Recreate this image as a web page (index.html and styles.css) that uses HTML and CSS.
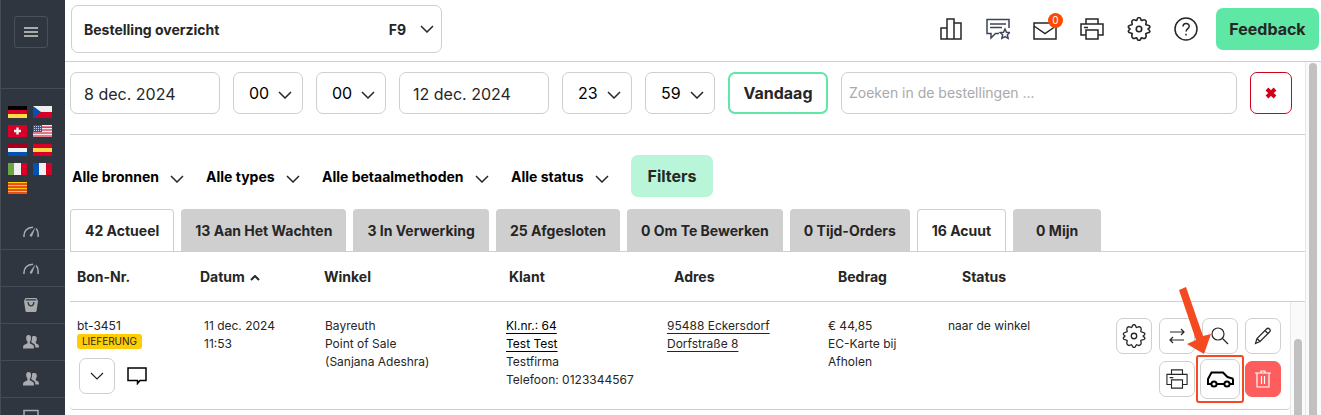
FILE: index.html
```html
<!DOCTYPE html>
<html lang="nl">
<head>
    <meta charset="UTF-8">
    <meta name="viewport" content="width=device-width, initial-scale=1.0">
    <title>Bestelling overzicht</title>
    <link rel="stylesheet" href="styles.css">
</head>
<body>
<svg class="sprite" aria-hidden="true">
    <symbol id="chevron" viewBox="0 0 14 8"><path d="M1 1l6 6 6-6"/></symbol>
    <symbol id="gear" viewBox="1 1 22 22">
        <path d="M9.800 4.200c.6-.3.4-2.700 2.200-2.700s1.600 2.400 2.200 2.700 2.100-1.700 3.700-.2.200 3.100.3 3.900c.3.600 3.800.4 3.800 2.100 0 1.600-1.700 1.500-1.700 2s1.700.8 1.700 2.200c0 1.500-3.500 1.300-3.800 2s1.300 2.300-.3 3.900-3.100-.4-3.700-.1-.4 2.500-2.200 2.500-1.600-2.200-2.200-2.500-2.100 1.700-3.700.1-.1-3.200-.3-3.900-3.600-.5-3.600-2c0-1.400 1.600-1.700 1.600-2.200S2.200 11.600 2.200 10c0-1.700 3.400-1.500 3.600-2.100s-1.300-2.400.3-3.900 3.100.5 3.700.2z"/>
        <circle cx="12" cy="12" r="2.500"/>
    </symbol>
    <symbol id="printer" viewBox="0 0 24 24">
        <path d="M6 7V2h12v5M6 18H1V7h22v11h-5M4 10.500h4"/>
        <path d="M6 13h12v9H6z"/>
    </symbol>
    <symbol id="gauge" viewBox="0 0 16 11">
        <path d="M1 11C.5 5 4 1.500 10 1.200M13.200 2.500C15 5 15.500 8 15 11"/>
        <path d="M12.500 1L7 8.800c-.8 1.700 1.300 2.700 2.200 1.200z" fill="currentColor" stroke="none"/>
    </symbol>
    <symbol id="users" viewBox="0 0 16 14">
        <path d="M5.500 0C3.600 0 3 1.500 3.200 3.500c.1 1.600.8 2.600 1.300 3.200v1.600L1 10c-.8.500-1 1.500-1 3.500h11c0-2-.2-3-1-3.500L6.800 8.300V6.700c.6-.6 1.200-1.600 1.300-3.200C8.200 1.500 7.500 0 5.500 0z"/>
        <path d="M10.500 1c-1 0-1.500.6-1.500 2 .1 2-.6 3-.9 4l2.900 2c1 .7 1.300 1.500 1.300 3.500H16c0-1.800-.2-2.600-1-3l-2.200-1.300V6.800c.5-.6.900-1.400 1-2.800.1-1.800-.8-3-2.300-3z"/>
    </symbol>
</svg>

<nav class="sidebar">
    <button type="button" class="menu-toggle" aria-label="Menu"><span></span><span></span><span></span></button>
    <div class="flags">
        <a href="#de" class="flag de" aria-label="Deutsch"></a>
        <a href="#cz" class="flag" aria-label="Čeština">
            <svg viewBox="0 0 19 12"><path fill="#eee" d="M0 0h19v6H0z"/><path fill="#d80027" d="M0 6h19v6H0z"/><path fill="#0052b4" d="M0 0l8 6-8 6z"/></svg>
        </a>
        <a href="#ch" class="flag" aria-label="Schwiiz">
            <svg viewBox="0 0 19 12"><path fill="#d80027" d="M0 0h19v12H0z"/><path fill="#f0f0f0" d="M8.300 2.500h2.400v2.300H13v2.400h-2.300v2.300H8.300V7.200H6V4.800h2.300z"/></svg>
        </a>
        <a href="#us" class="flag" aria-label="English">
            <svg viewBox="0 0 19 12"><path fill="#eee" d="M0 0h19v12H0z"/><path stroke="#d80027" stroke-width="1.200" d="M0 2.100h19M0 5h19M0 8h19M0 11h19"/><path fill="#2e52b2" d="M0 0h9v7H0z"/><path stroke="#c5d0ee" stroke-dasharray="1 1" d="M1 1.500h7M1 3.500h7M1 5.500h7"/></svg>
        </a>
        <a href="#nl" class="flag nl" aria-label="Nederlands"></a>
        <a href="#es" class="flag es" aria-label="Español"></a>
        <a href="#it" class="flag it" aria-label="Italiano"></a>
        <a href="#fr" class="flag fr" aria-label="Français"></a>
        <a href="#ca" class="flag ca" aria-label="Català"></a>
    </div>
    <ul class="side-menu">
        <li><a href="#dashboard" aria-label="Dashboard"><svg class="line" width="16" height="11"><use href="#gauge"/></svg></a></li>
        <li><a href="#stats" aria-label="Statistiek"><svg class="line" width="16" height="11"><use href="#gauge"/></svg></a></li>
        <li><a href="#orders" aria-label="Bestellingen">
            <svg width="14" height="14" viewBox="0 0 14 14"><path fill="currentColor" fill-rule="evenodd" d="M1.500 0h11L14 3l-1.500 10c-.1.700-.5 1-1 1h-9c-.5 0-.9-.3-1-1L0 3zM2 1.300L1.500 2.500h11L12 1.300zM3.500 4c0 3 1.500 4.500 3.500 4.500S10.500 7 10.500 4H9.200c0 2-.8 3.200-2.200 3.200S4.800 6 4.800 4z"/></svg>
        </a></li>
        <li><a href="#customers" aria-label="Klanten"><svg width="16" height="14" fill="currentColor"><use href="#users"/></svg></a></li>
        <li><a href="#staff" aria-label="Personeel"><svg width="16" height="14" fill="currentColor"><use href="#users"/></svg></a></li>
        <li><a href="#pos" aria-label="Kassa"><svg class="line" width="18" height="14" viewBox="0 0 18 14"><path d="M2 11V1.500h14V11M0 13h18"/></svg></a></li>
    </ul>
</nav>

<div class="page">
    <header class="topbar">
        <button type="button" class="page-select">
            <span>Bestelling overzicht</span>
            <kbd>F9</kbd>
            <svg class="chevron" width="14" height="8"><use href="#chevron"/></svg>
        </button>
        <div class="tools">
            <a href="#stats" aria-label="Statistiek"><svg width="24" height="24" viewBox="0 0 24 24"><path d="M2 11h6v11H2zM8 2h7v20H8zM15 6h7v16h-7z"/></svg></a>
            <a href="#reviews" class="reviews" aria-label="Beoordelingen"><svg width="24" height="24" viewBox="0 0 24 24"><path d="M23 11V2.500H1v14h4V21l4.500-4.500H13M4 7h16M4 10.500h12"/><path d="M19 12l1.500 3.200 3.300.3-2.400 2.300.7 3.500-3.100-1.700-3.100 1.700.7-3.500-2.400-2.300 3.300-.3z"/></svg></a>
            <a href="#mail" class="mail" aria-label="Berichten"><svg width="24" height="24" viewBox="0 0 24 24"><path d="M1 6h22v16H1zM1 9l11 7.500L23 9"/></svg><span class="badge">0</span></a>
            <a href="#print" aria-label="Afdrukken"><svg width="24" height="24"><use href="#printer"/></svg></a>
            <a href="#settings" aria-label="Instellingen"><svg width="24" height="24"><use href="#gear"/></svg></a>
            <a href="#help" aria-label="Help"><svg width="24" height="24" viewBox="0 0 24 24"><circle cx="12" cy="12" r="11"/><path d="M9 9.500c0-4 6.200-4 6.200-.3 0 2.500-3.100 2.400-3.100 5.300M12 16.800v1.700"/></svg></a>
        </div>
        <button type="button" class="btn btn-feedback">Feedback</button>
    </header>

    <div class="content">
        <main>
            <form class="search-bar">
                <input type="text" class="date" value="8 dec. 2024" aria-label="Datum van">
                <label class="select"><select aria-label="Uur van"><option>00</option></select><svg class="chevron" width="14" height="8"><use href="#chevron"/></svg></label>
                <label class="select"><select aria-label="Minuut van"><option>00</option></select><svg class="chevron" width="14" height="8"><use href="#chevron"/></svg></label>
                <input type="text" class="date" value="12 dec. 2024" aria-label="Datum tot">
                <label class="select"><select aria-label="Uur tot"><option>23</option></select><svg class="chevron" width="14" height="8"><use href="#chevron"/></svg></label>
                <label class="select"><select aria-label="Minuut tot"><option>59</option></select><svg class="chevron" width="14" height="8"><use href="#chevron"/></svg></label>
                <button type="button" class="btn btn-today">Vandaag</button>
                <input type="search" class="search" placeholder="Zoeken in de bestellingen ..." aria-label="Zoeken">
                <button type="reset" class="btn btn-clear" aria-label="Wissen">
                    <svg width="12" height="12" viewBox="0 0 12 12"><path d="M2 2l8 8M10 2l-8 8"/></svg>
                </button>
            </form>

            <form class="filters">
                <label class="filter"><select aria-label="Bronnen"><option>Alle bronnen</option></select><svg class="chevron" width="14" height="8"><use href="#chevron"/></svg></label>
                <label class="filter"><select aria-label="Types"><option>Alle types</option></select><svg class="chevron" width="14" height="8"><use href="#chevron"/></svg></label>
                <label class="filter"><select aria-label="Betaalmethoden"><option>Alle betaalmethoden</option></select><svg class="chevron" width="14" height="8"><use href="#chevron"/></svg></label>
                <label class="filter"><select aria-label="Status"><option>Alle status</option></select><svg class="chevron" width="14" height="8"><use href="#chevron"/></svg></label>
                <button type="button" class="btn btn-filters">Filters</button>
            </form>

            <div class="tabs">
                <button type="button" class="tab active">42 Actueel</button>
                <button type="button" class="tab">13 Aan Het Wachten</button>
                <button type="button" class="tab">3 In Verwerking</button>
                <button type="button" class="tab">25 Afgesloten</button>
                <button type="button" class="tab">0 Om Te Bewerken</button>
                <button type="button" class="tab">0 Tijd-Orders</button>
                <button type="button" class="tab active">16 Acuut</button>
                <button type="button" class="tab">0 Mijn</button>
            </div>

            <table class="orders">
                <thead>
                    <tr>
                        <th>Bon-Nr.</th>
                        <th>Datum <svg class="sort" width="10" height="6" viewBox="0 0 10 6"><path d="M1 5l4-4 4 4"/></svg></th>
                        <th>Winkel</th>
                        <th>Klant</th>
                        <th>Adres</th>
                        <th>Bedrag</th>
                        <th>Status</th>
                    </tr>
                </thead>
                <tbody>
                    <tr>
                        <td>
                            bt-3451
                            <span class="tag">LIEFERUNG</span>
                            <div class="order-tools">
                                <button type="button" class="icon-btn" aria-label="Details"><svg width="14" height="8"><use href="#chevron"/></svg></button>
                                <svg class="comment" width="20" height="18" viewBox="0 0 20 18"><path d="M1 1h18v12.500h-6l-2.500 3v-3H1z"/></svg>
                            </div>
                        </td>
                        <td>11 dec. 2024<br>11:53</td>
                        <td>Bayreuth<br>Point of Sale<br>(Sanjana Adeshra)</td>
                        <td><a href="#customer" class="customer">Kl.nr.: 64</a><br><a href="#customer" class="customer">Test Test</a><br>Testfirma<br>Telefoon: 0123344567</td>
                        <td><a href="#map">95488 Eckersdorf</a><br><a href="#map">Dorfstraße 8</a></td>
                        <td>€ 44,85<br>EC-Karte bij<br>Afholen</td>
                        <td class="status">
                            <span>naar de winkel</span>
                            <div class="actions">
                                <button type="button" class="icon-btn" aria-label="Instellingen"><svg width="24" height="24"><use href="#gear"/></svg></button>
                                <button type="button" class="icon-btn" aria-label="Verplaatsen"><svg width="16" height="16" viewBox="0 0 16 16"><path d="M1 4h14M12 1l3 3-3 3M15 12H1M4 9l-3 3 3 3"/></svg></button>
                                <button type="button" class="icon-btn" aria-label="Bekijken"><svg width="18" height="18" viewBox="0 0 18 18"><circle cx="7" cy="7" r="6"/><path d="M11.500 11.500L17 17"/></svg></button>
                                <button type="button" class="icon-btn" aria-label="Bewerken"><svg width="18" height="18" viewBox="0 0 18 18"><path d="M1.500 16.500l1.500-5L12.500 2c2-2 5 1 3 3L6 14.500zM11 3.500L14.500 7M3 11.500L6 14.500"/></svg></button>
                                <button type="button" class="icon-btn print" aria-label="Afdrukken"><svg width="22" height="22"><use href="#printer"/></svg></button>
                                <div class="highlight">
                                    <button type="button" class="icon-btn" aria-label="Bezorger">
                                        <svg class="car" width="28" height="18" viewBox="0 0 28 18"><path d="M5 14H2V9l3.500-6.500h11.500l4.500 4.500 5 1.500.5 1.500v4h-3M11 14h7"/><circle cx="8" cy="14" r="2.600"/><circle cx="21" cy="14" r="2.600"/></svg>
                                    </button>
                                    <svg class="arrow" width="34" height="68" viewBox="0 0 34 68"><path d="M1 3l7-3 17 49 8-2-7 20L9 57l9-4z"/></svg>
                                </div>
                                <button type="button" class="icon-btn delete" aria-label="Verwijderen"><svg width="16" height="20" viewBox="0 0 16 20"><path d="M0 4h16M2 4v14h12V4M6 4V2h4v2M6.500 7v8M9.500 7v8"/></svg></button>
                            </div>
                        </td>
                    </tr>
                </tbody>
            </table>
            <div class="scrollbar list-scroll"><span></span></div>
        </main>
        <div class="scrollbar page-scroll"><span></span></div>
    </div>
</div>
</body>
</html>
```
FILE: styles.css
```css
:root {
    --dark: #2f3640;
    --text: #262626;
    --border: #cfcfcf;
    --green: #5fe7a5;
    --light-green: #b9f5d8;
    --red: #d0021b;
    --orange: #f44a22;
}

* {
    box-sizing: border-box;
}

body {
    display: flex;
    height: 100vh;
    margin: 0;
    overflow: hidden;
    font-family: Inter, "Liberation Sans", sans-serif;
    font-size: 12px;
    color: var(--text);
    background-color: #fff;
}

button, input, select {
    font: inherit;
    color: inherit;
}

button {
    cursor: pointer;
}

svg {
    display: block;
    flex: none;
}

.sprite {
    position: absolute;
    width: 0;
    height: 0;
}

/* Sidebar */
.sidebar {
    flex: none;
    width: 65px;
    overflow: hidden;
    background-color: var(--dark);
    border-left: 1px solid #454c56;
}

.menu-toggle {
    display: flex;
    flex-direction: column;
    align-items: center;
    justify-content: center;
    gap: 2px;
    width: 34px;
    height: 32px;
    margin: 16px 13px 40px;
    padding: 0;
    background: none;
    border: 1px solid #4a505a;
    border-radius: 3px;
}

.menu-toggle span {
    width: 14px;
    height: 2px;
    background-color: #aaa;
}

.flags {
    display: grid;
    grid-template-columns: 19px 19px;
    gap: 7px 6px;
    padding: 17px 7px 19px;
    border-top: 1px solid #454c56;
}

.flag {
    height: 12px;
}

.de { background: linear-gradient(#000 33%, #d80027 33% 66%, #ffda44 66%); }
.nl { background: linear-gradient(#a2001d 33%, #f0f0f0 33% 66%, #0052b4 66%); }
.es { background: linear-gradient(#d80027 33%, #ffda44 33% 66%, #d80027 66%); }
.it { background: linear-gradient(90deg, #6da544 33%, #f0f0f0 33% 66%, #d80027 66%); }
.fr { background: linear-gradient(90deg, #0052b4 33%, #f0f0f0 33% 66%, #d80027 66%); }
.ca { background: repeating-linear-gradient(#ffcd00 0 1px, #e8501a 1px 3px); }

.side-menu {
    margin: 0;
    padding: 0;
    list-style: none;
}

.side-menu a {
    display: flex;
    align-items: center;
    justify-content: center;
    height: 37px;
    padding-right: 4px;
    color: #a9abae;
    border-bottom: 1px solid #454c56;
}

.side-menu .line {
    fill: none;
    stroke: currentColor;
    stroke-width: 1.5px;
}

/* Top bar */
.page {
    display: flex;
    flex: 1;
    flex-direction: column;
    min-width: 0;
}

.topbar {
    display: flex;
    align-items: center;
    height: 62px;
    padding: 0 2px 4px 6px;
    border-bottom: 1px solid var(--border);
}

.page-select {
    display: flex;
    align-items: center;
    width: 371px;
    height: 48px;
    padding: 1px 7px 0 12px;
    font-size: 14px;
    font-weight: 700;
    background: none;
    border: 1px solid var(--border);
    border-radius: 7px;
}

.page-select kbd {
    margin: 0 14px 0 auto;
    font: inherit;
}

.chevron {
    fill: none;
    stroke: var(--text);
    stroke-width: 1.5px;
    pointer-events: none;
}

.tools {
    display: flex;
    gap: 23px;
    margin: 0 18px 0 auto;
}

.tools a {
    position: relative;
    color: var(--text);
}

.tools svg {
    fill: none;
    stroke: currentColor;
    stroke-width: 1.5px;
}

.tools .reviews {
    color: #3d4457;
}

.badge {
    position: absolute;
    top: -4px;
    right: -6px;
    width: 15px;
    height: 15px;
    font-size: 10px;
    line-height: 15px;
    text-align: center;
    color: #fff;
    background-color: #ff4800;
    border-radius: 50%;
}

.btn {
    height: 42px;
    padding: 0;
    font-size: 16px;
    font-weight: 700;
    border: none;
    border-radius: 7px;
}

.btn-feedback {
    width: 103px;
    background-color: var(--green);
}

/* Content */
.content {
    display: flex;
    flex: 1;
    min-height: 0;
}

main {
    position: relative;
    flex: 1;
    min-width: 0;
    padding-left: 5px;
    overflow: hidden;
}

.search-bar {
    display: flex;
    gap: 13px;
    padding: 10px 13px 20px 0;
    border-bottom: 1px solid var(--border);
}

.search-bar input, .select select {
    height: 42px;
    padding: 0 13px;
    font-size: 16px;
    background: #fff;
    border: 1px solid var(--border);
    border-radius: 7px;
    outline: none;
}

.search-bar .date {
    width: 150px;
    padding-top: 2px;
}

.search-bar .search {
    flex: 1;
    min-width: 0;
    padding: 0 7px 2px;
    font-size: 14px;
    appearance: none;
}

.search::placeholder {
    color: #a9a9a9;
}

.select, .filter {
    position: relative;
}

.select select, .filter select {
    appearance: none;
    color: #000;
}

.select select {
    width: 70px;
    padding: 0 0 0 15px;
}

.select .chevron {
    position: absolute;
    top: 19px;
    right: 11px;
}

.btn-today {
    width: 100px;
    background-color: #fff;
    border: 2px solid var(--green);
}

.btn-clear {
    display: flex;
    align-items: center;
    justify-content: center;
    width: 42px;
    background-color: #fff;
    border: 1px solid var(--red);
}

.btn-clear svg {
    stroke: var(--red);
    stroke-width: 4px;
}

.filters {
    display: flex;
    align-items: center;
    gap: 22px;
    padding: 20px 0 12px 2px;
}

.filter select {
    height: 42px;
    padding: 0 25px 0 0;
    font-size: 14px;
    font-weight: 700;
    background: none;
    border: none;
}

.filter .chevron {
    position: absolute;
    top: 20px;
    right: 0;
}

.btn-filters {
    width: 82px;
    background-color: var(--light-green);
}

.tabs {
    display: flex;
    gap: 7px;
    border-bottom: 1px solid var(--border);
}

.tab {
    min-width: 88px;
    height: 42px;
    padding: 0 13px;
    font-size: 14px;
    font-weight: 700;
    white-space: nowrap;
    background-color: var(--border);
    border: 1px solid var(--border);
    border-bottom: none;
    border-radius: 4px 4px 0 0;
}

.tab.active {
    padding: 0 14px;
    background-color: #fff;
}

.orders, .orders thead, .orders tbody {
    display: block;
}

.orders tr {
    display: grid;
    grid-template-columns: 123fr 124fr 185fr 165fr 164fr 124fr 350fr;
    border-bottom: 1px solid var(--border);
}

.orders th {
    padding: 0 0 0 7px;
    font-size: 14px;
    font-weight: 700;
    line-height: 49px;
    text-align: left;
}

.sort {
    display: inline-block;
    margin-left: 2px;
    vertical-align: 1px;
    fill: none;
    stroke: var(--text);
    stroke-width: 2px;
}

.orders tbody {
    margin-right: 15px;
}

.orders tbody tr {
    grid-template-columns: 127fr 121fr 181fr 161fr 161fr 120fr 349fr;
    min-height: 108px;
    border-bottom-left-radius: 4px;
    border-bottom-right-radius: 4px;
}

.orders td {
    padding: 15px 0 0 7px;
    line-height: 18px;
}

.orders td a {
    color: inherit;
    text-decoration: underline;
    text-underline-offset: 3px;
}

.orders td .customer {
    color: #000;
}

.tag {
    display: block;
    width: 65px;
    height: 15px;
    margin-top: -1px;
    font-size: 10px;
    line-height: 15px;
    text-align: center;
    background-color: #ffcd05;
    border-radius: 3px;
}

.order-tools {
    display: flex;
    align-items: center;
    gap: 12px;
    margin: 9px 0 0 2px;
}

.icon-btn {
    display: flex;
    align-items: center;
    justify-content: center;
    width: 36px;
    height: 36px;
    padding: 0;
    background-color: #fff;
    border: 1px solid var(--border);
    border-radius: 7px;
}

.icon-btn svg {
    fill: none;
    stroke: var(--text);
    stroke-width: 1.2px;
}

.comment {
    fill: none;
    stroke: #000;
    stroke-width: 1.5px;
}

.orders .status {
    display: flex;
    justify-content: space-between;
    padding-right: 9px;
}

.actions {
    display: grid;
    grid-template-columns: repeat(4, 36px);
    align-content: start;
    gap: 7px;
    padding-top: 1px;
}

.actions .print {
    grid-column: 2;
}

.icon-btn.delete {
    background-color: #fd5d5d;
    border-color: #fd5d5d;
}

.icon-btn.delete svg {
    stroke: #fff;
}

.highlight {
    position: relative;
    display: flex;
    align-items: center;
    justify-content: center;
    height: 36px;
}

.highlight .icon-btn {
    flex: none;
    width: 40px;
    height: 40px;
}

.highlight .car {
    stroke: #000;
    stroke-width: 2px;
}

.highlight::after {
    content: "";
    position: absolute;
    inset: -6px;
    border: 2px solid var(--orange);
    border-radius: 3px;
    pointer-events: none;
}

.arrow {
    position: absolute;
    right: 26px;
    bottom: 42px;
    fill: var(--orange);
    pointer-events: none;
}

/* Scrollbars */
.scrollbar {
    display: flex;
    background-color: #fafafa;
    border-left: 1px solid #e8e8e8;
}

.scrollbar span {
    width: 8px;
    background-color: #c1c1c1;
    border-radius: 4px 4px 0 0;
}

.page-scroll {
    width: 16px;
    padding: 1px 0 0 3px;
}

.list-scroll {
    position: absolute;
    top: 240px;
    right: 0;
    bottom: 0;
    width: 15px;
    padding: 37px 0 0 3px;
}
```
